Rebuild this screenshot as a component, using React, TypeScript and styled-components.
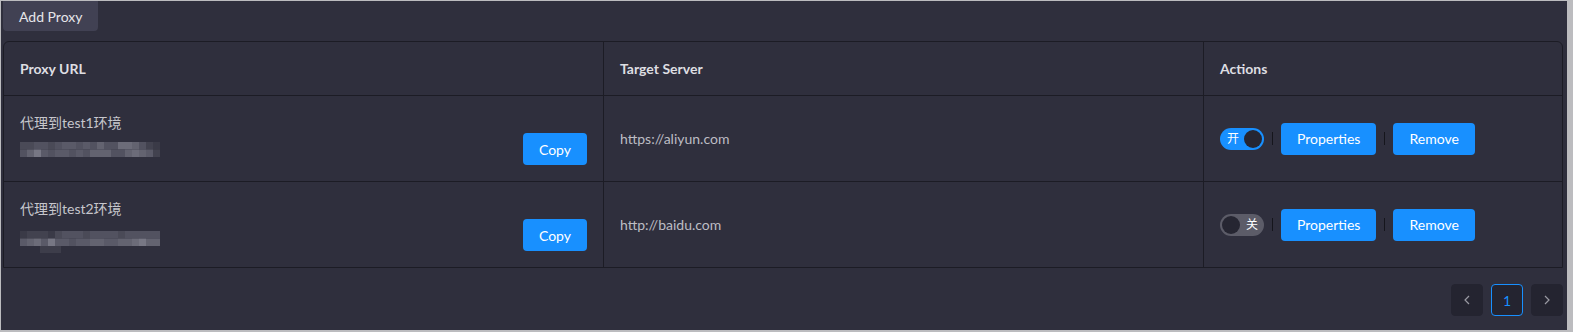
import React from "react";
import styled, { createGlobalStyle } from "styled-components";

type Proxy = {
  name: string;
  target: string;
  enabled: boolean;
  blur: number[][];
  tail?: boolean;
};

const proxies: Proxy[] = [
  {
    name: "代理到test1环境",
    target: "https://aliyun.com",
    enabled: true,
    blur: [
      [3, 3, 4, 4, 3, 4, 5, 5, 4, 5, 4, 6, 4, 4, 7, 7, 6, 4, 2, 1],
      [4, 6, 8, 5, 4, 5, 5, 4, 5, 4, 6, 6, 6, 4, 4, 6, 7, 6, 5, 2],
    ],
  },
  {
    name: "代理到test2环境",
    target: "http://baidu.com",
    enabled: false,
    blur: [
      [1, 2, 2, 2, 1, 3, 4, 4, 4, 3, 4, 4, 4, 4, 3, 4, 4, 4, 4, 4],
      [5, 6, 7, 5, 8, 5, 5, 4, 5, 5, 6, 6, 5, 5, 6, 6, 7, 8, 6, 6],
    ],
    tail: true,
  },
];

const Global = createGlobalStyle`
  html, body {
    margin: 0;
    background: #bcbcbf;
  }
  body {
    padding: 1px 6px 2px 1px;
    font-family: "Segoe UI", Lato, "Noto Sans CJK SC", sans-serif;
    font-size: 14px;
  }
`;

const Page = styled.div`
  box-sizing: border-box;
  height: 329px;
  background: #2f2f3d;
  padding: 0 4px 0 2px;
  color: #d6d6db;
`;

const AddButton = styled.button`
  display: block;
  height: 30px;
  padding: 0 16px;
  border: none;
  border-radius: 0 0 4px 4px;
  background: #414153;
  color: #e6e6ea;
  font: inherit;
  font-size: 14px;
  margin-bottom: 10px;
`;

const Table = styled.table`
  width: 100%;
  border-collapse: separate;
  border-spacing: 0;
  table-layout: fixed;
  border: 1px solid #1c1c25;
  border-radius: 6px 6px 0 0;
`;

const HeadCell = styled.th<{ $last?: boolean }>`
  height: 53px;
  padding: 0 16px;
  text-align: left;
  font-weight: 700;
  color: #dedee2;
  border-bottom: 1px solid #1c1c25;
  border-right: ${(p) => (p.$last ? "none" : "1px solid #1c1c25")};
`;

const Cell = styled.td<{ $last?: boolean; $bottom?: boolean }>`
  height: 85px;
  box-sizing: border-box;
  padding: 16px;
  vertical-align: middle;
  color: #bdbdc4;
  border-bottom: ${(p) => (p.$bottom ? "none" : "1px solid #1c1c25")};
  border-right: ${(p) => (p.$last ? "none" : "1px solid #1c1c25")};
`;

const UrlBox = styled.div`
  display: flex;
  justify-content: space-between;
  align-items: flex-end;
`;

const NameLine = styled.div`
  line-height: 22px;
  color: #c6c6cc;
`;

const UrlLine = styled.div`
  height: 22px;
  margin-top: 9px;
  display: flex;
  align-items: center;
`;

const BlueButton = styled.button`
  height: 32px;
  padding: 0 16px;
  border: none;
  border-radius: 4px;
  background: #1890ff;
  color: #fff;
  font: inherit;
  font-size: 14px;
`;

const Actions = styled.div`
  display: flex;
  align-items: center;
`;

const Split = styled.span`
  width: 1px;
  height: 13px;
  margin: 0 8px;
  background: #15151c;
`;

const Switch = styled.span<{ $on: boolean }>`
  box-sizing: border-box;
  width: 44px;
  height: 22px;
  border-radius: 11px;
  padding: 2px;
  display: flex;
  align-items: center;
  flex-direction: ${(p) => (p.$on ? "row" : "row-reverse")};
  justify-content: space-between;
  background: ${(p) => (p.$on ? "#1890ff" : "#5c5c68")};
  color: #fff;
  font-size: 12px;
`;

const SwitchLabel = styled.span`
  padding: 0 4px 0 5px;
  line-height: 18px;
`;

const Knob = styled.span`
  width: 18px;
  height: 18px;
  border-radius: 50%;
  background: #262632;
`;

const Pager = styled.div`
  display: flex;
  justify-content: flex-end;
  gap: 8px;
  margin-top: 16px;
`;

const PageItem = styled.span<{ $active?: boolean }>`
  box-sizing: border-box;
  width: 32px;
  height: 32px;
  border-radius: 4px;
  display: flex;
  align-items: center;
  justify-content: center;
  background: #242430;
  border: 1px solid ${(p) => (p.$active ? "#1890ff" : "#242430")};
  color: ${(p) => (p.$active ? "#1890ff" : "#9a9aa3")};
  font-size: 14px;
`;

function Redacted({ rows, tail }: { rows: number[][]; tail?: boolean }) {
  const shades = ["#33333f", "#3a3a47", "#42424f", "#4a4a57", "#525260", "#5a5a68", "#636370", "#6c6c79", "#777784"];
  return (
    <svg width="150" height="24" style={{ display: "block", marginTop: tail ? 6 : 0 }}>
      {rows.map((r, y) =>
        r.map((v, x) => (
          <rect key={`${y}-${x}`} x={x * 7} y={y * 7.5} width="7" height="7.5" fill={shades[v]} />
        ))
      )}
      {tail && <rect x="20" y="15" width="21" height="7" fill="#3d3d4a" />}
    </svg>
  );
}

export default function App() {
  return (
    <>
      <Global />
      <Page>
        <AddButton>Add Proxy</AddButton>
        <Table>
          <colgroup>
            <col style={{ width: 600 }} />
            <col style={{ width: 600 }} />
            <col />
          </colgroup>
          <thead>
            <tr>
              <HeadCell>Proxy URL</HeadCell>
              <HeadCell>Target Server</HeadCell>
              <HeadCell $last>Actions</HeadCell>
            </tr>
          </thead>
          <tbody>
            {proxies.map((p, i) => {
              const bottom = i === proxies.length - 1;
              return (
                <tr key={p.name}>
                  <Cell $bottom={bottom}>
                    <UrlBox>
                      <div>
                        <NameLine>{p.name}</NameLine>
                        <UrlLine>
                          <Redacted rows={p.blur} tail={p.tail} />
                        </UrlLine>
                      </div>
                      <BlueButton>Copy</BlueButton>
                    </UrlBox>
                  </Cell>
                  <Cell $bottom={bottom}>{p.target}</Cell>
                  <Cell $bottom={bottom} $last>
                    <Actions>
                      <Switch $on={p.enabled}>
                        <SwitchLabel>{p.enabled ? "开" : "关"}</SwitchLabel>
                        <Knob />
                      </Switch>
                      <Split />
                      <BlueButton>Properties</BlueButton>
                      <Split />
                      <BlueButton>Remove</BlueButton>
                    </Actions>
                  </Cell>
                </tr>
              );
            })}
          </tbody>
        </Table>
        <Pager>
          <PageItem>
            <svg width="12" height="12" viewBox="0 0 12 12">
              <path d="M8 2 L4 6 L8 10" fill="none" stroke="currentColor" strokeWidth="1.2" />
            </svg>
          </PageItem>
          <PageItem $active>1</PageItem>
          <PageItem>
            <svg width="12" height="12" viewBox="0 0 12 12">
              <path d="M4 2 L8 6 L4 10" fill="none" stroke="currentColor" strokeWidth="1.2" />
            </svg>
          </PageItem>
        </Pager>
      </Page>
    </>
  );
}
